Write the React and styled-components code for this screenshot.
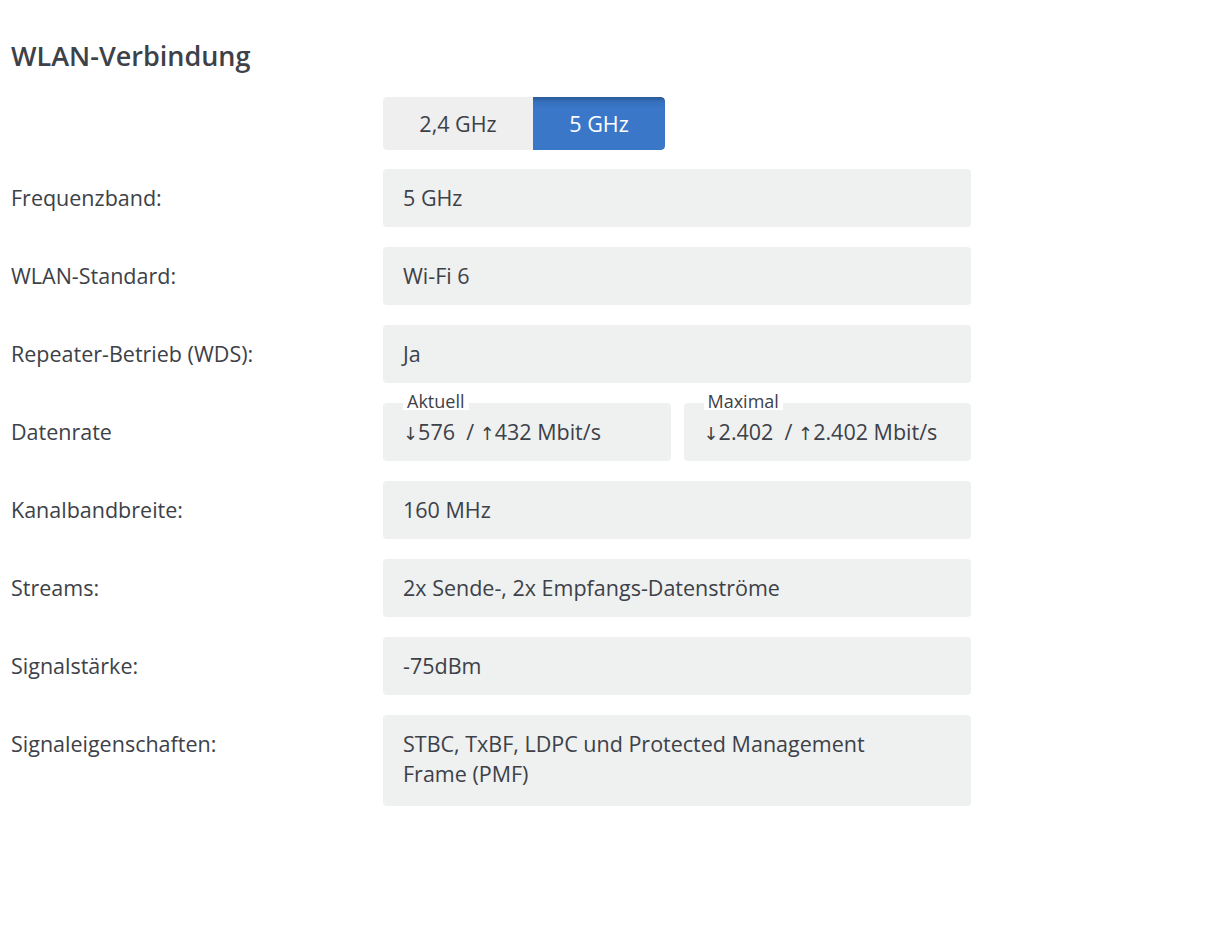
import React, { useState } from "react";
import styled, { createGlobalStyle } from "styled-components";

const GlobalStyle = createGlobalStyle`
  body {
    margin: 0;
    background: #fff;
    font-family: "Open Sans", "Noto Sans", sans-serif;
    color: #3d4148;
  }
`;

const Page = styled.div`
  padding: 38px 11px 40px 11px;
`;

const Title = styled.h2`
  margin: 0 0 23px 0;
  font-size: 27px;
  font-weight: 600;
  line-height: 36px;
  color: #3d4148;
`;

const Grid = styled.div`
  display: grid;
  grid-template-columns: 372px 588px;
  row-gap: 20px;
  align-items: start;
`;

const Label = styled.div`
  font-size: 21.5px;
  line-height: 58px;
  color: #3d4148;
`;

const Toggle = styled.div`
  display: flex;
  height: 53px;
  margin-bottom: -1px;
  border-radius: 4px;
  overflow: hidden;
  width: max-content;
`;

const ToggleButton = styled.button`
  border: none;
  font-family: inherit;
  font-size: 21.5px;
  width: ${(p) => p.w}px;
  height: 53px;
  cursor: pointer;
  color: ${(p) => (p.active ? "#fff" : "#3d4148")};
  background: ${(p) =>
    p.active
      ? "linear-gradient(to bottom, #2a5a98 0px, #3670bd 5px, #3a77c8 12px, #3a77c8 100%)"
      : "#efefef"};
  border-radius: ${(p) => (p.active ? "0 4px 4px 0" : "4px 0 0 4px")};
`;

const Value = styled.div`
  background: #eff0f0;
  border-radius: 4px;
  min-height: 58px;
  box-sizing: border-box;
  padding: 14px 50px ${(p) => (p.multi ? 17 : 14)}px 20px;
  font-size: 21.5px;
  line-height: 30px;
`;

const Split = styled.div`
  display: grid;
  grid-template-columns: 1fr 1fr;
  gap: 13px;
`;

const Boxed = styled(Value)`
  position: relative;
  height: 58px;
  padding-right: 10px;
  white-space: nowrap;
`;

const Legend = styled.span`
  position: absolute;
  top: -10px;
  left: 20px;
  padding: 0 4px;
  background: #fff;
  font-size: 18px;
  line-height: 17px;
`;

const Arrow = styled.span`
  font-family: "DejaVu Sans", sans-serif;
  font-size: 18px;
  line-height: 0;
  color: #3d4148;
`;

const rows = [
  ["Frequenzband:", "5 GHz"],
  ["WLAN-Standard:", "Wi-Fi 6"],
  ["Repeater-Betrieb (WDS):", "Ja"],
];

const rest = [
  ["Kanalbandbreite:", "160 MHz"],
  ["Streams:", "2x Sende-, 2x Empfangs-Datenströme"],
  ["Signalstärke:", "-75dBm"],
  ["Signaleigenschaften:", "STBC, TxBF, LDPC und Protected Management Frame (PMF)", true],
];

const Rate = ({ down, up }) => (
  <>
    <Arrow>↓</Arrow>
    {down} &nbsp;/ <Arrow>↑</Arrow>
    {up} Mbit/s
  </>
);

export default function App() {
  const [band, setBand] = useState("5");
  return (
    <>
      <GlobalStyle />
      <Page>
        <Title>WLAN-Verbindung</Title>
        <Grid>
          <div />
          <Toggle>
            <ToggleButton w={150} active={band === "2.4"} onClick={() => setBand("2.4")}>
              2,4 GHz
            </ToggleButton>
            <ToggleButton w={132} active={band === "5"} onClick={() => setBand("5")}>
              5 GHz
            </ToggleButton>
          </Toggle>
          {rows.map(([k, v]) => (
            <React.Fragment key={k}>
              <Label>{k}</Label>
              <Value>{v}</Value>
            </React.Fragment>
          ))}
          <Label>Datenrate</Label>
          <Split>
            <Boxed>
              <Legend>Aktuell</Legend>
              <Rate down="576" up="432" />
            </Boxed>
            <Boxed>
              <Legend>Maximal</Legend>
              <Rate down="2.402" up="2.402" />
            </Boxed>
          </Split>
          {rest.map(([k, v, multi]) => (
            <React.Fragment key={k}>
              <Label>{k}</Label>
              <Value multi={multi}>{v}</Value>
            </React.Fragment>
          ))}
        </Grid>
      </Page>
    </>
  );
}
